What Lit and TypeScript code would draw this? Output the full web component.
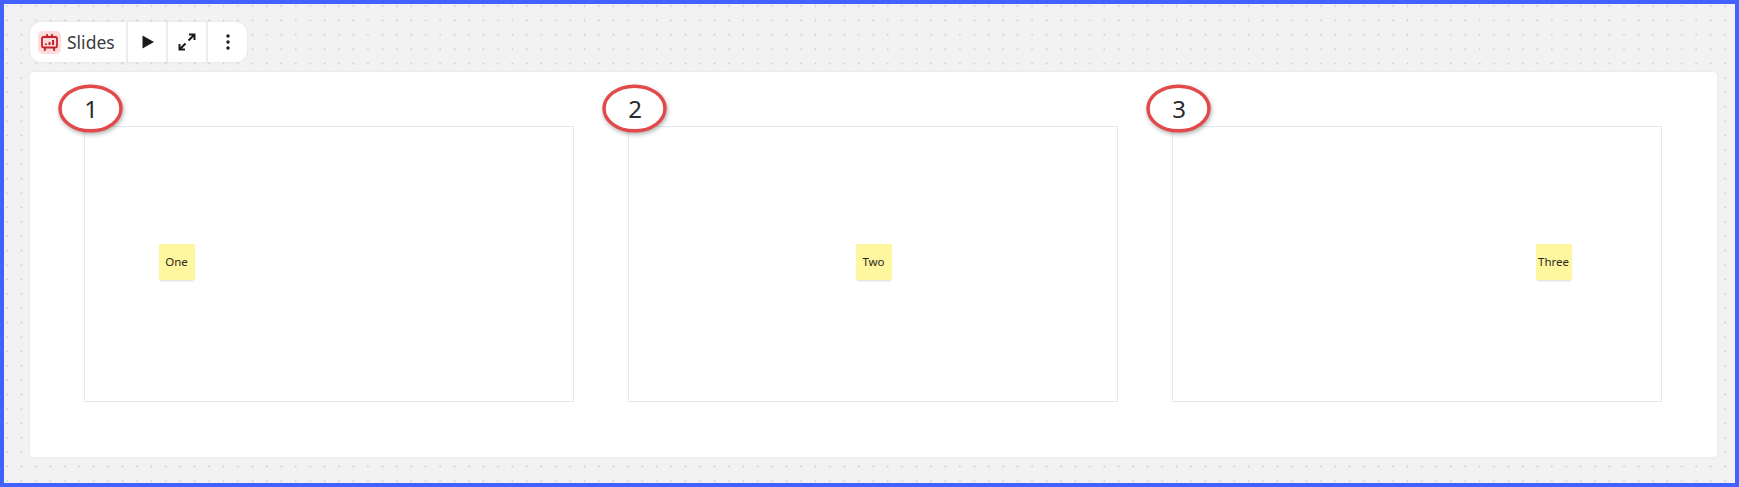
import { LitElement, html, css } from "lit";
import { customElement } from "lit/decorators.js";

interface Slide {
  num: string;
  note: string;
  noteLeft: number;
}

const SLIDES: Slide[] = [
  { num: "1", note: "One", noteLeft: 73.5 },
  { num: "2", note: "Two", noteLeft: 226.5 },
  { num: "3", note: "Three", noteLeft: 362.5 },
];

@customElement("app-root")
export class AppRoot extends LitElement {
  static styles = css`
    :host {
      display: block;
      box-sizing: border-box;
      width: 1739px;
      height: 487px;
      padding: 18px 18px 27px 26px;
      border: 4px solid #4262ff;
      background-color: #f2f2f2;
      background-image: radial-gradient(circle, #cdcdcd 0.7px, transparent 1.2px);
      background-size: 14.44px 14.4px;
      background-position: -4.2px -5.2px;
      font-family: "Noto Sans", "Open Sans", sans-serif;
      color: #222;
    }

    .toolbar {
      display: flex;
      width: fit-content;
      height: 40px;
      margin-bottom: 10px;
      background: #fff;
      border-radius: 11px;
      box-shadow: 0 0 2px rgba(0, 0, 0, 0.12);
      overflow: hidden;
    }

    .brand {
      display: flex;
      align-items: center;
      gap: 6px;
      width: 96px;
      box-sizing: border-box;
      padding-left: 8px;
      font-size: 17.5px;
      color: #3a3b42;
    }

    .logo {
      display: flex;
      align-items: center;
      justify-content: center;
      width: 23px;
      height: 23px;
      border-radius: 5px;
      background: #fcdcdc;
    }

    .tool {
      display: flex;
      align-items: center;
      justify-content: center;
      width: 40px;
      border-left: 2px solid #ececec;
      box-sizing: border-box;
    }

    .tool:last-child {
      width: 41px;
    }

    .panel {
      display: flex;
      gap: 54px;
      padding: 54px 55px 55px 54px;
      background: #fff;
      border-radius: 3px;
      box-shadow: 0 0 2px rgba(0, 0, 0, 0.1);
    }

    .frame {
      position: relative;
      box-sizing: border-box;
      width: 491px;
      height: 276px;
      border: 1.5px solid #e8e8e8;
    }

    .circle {
      position: absolute;
      left: -27.5px;
      top: -43px;
      width: 65px;
      height: 49px;
      overflow: visible;
    }

    .circle ellipse {
      fill: #fff;
      stroke: #e2494b;
      stroke-width: 3.4px;
      filter: drop-shadow(1px 2px 2px rgba(0, 0, 0, 0.3));
    }

    .num {
      position: absolute;
      left: -26px;
      top: -43px;
      width: 64px;
      height: 48px;
      display: flex;
      align-items: center;
      justify-content: center;
      font-size: 24px;
      color: #2a2a2a;
    }

    .note {
      position: absolute;
      top: 117px;
      display: flex;
      align-items: center;
      justify-content: center;
      box-sizing: border-box;
      width: 36px;
      height: 36px;
      padding-bottom: 2px;
      background: #fff6a0;
      box-shadow: 0 2px 2px -1px rgba(0, 0, 0, 0.14);
      font-size: 11.5px;
      color: #2a2a20;
    }
  `;

  render() {
    return html`
      <div class="toolbar">
        <div class="brand">
          <span class="logo">
            <svg width="19" height="19" viewBox="0 0 19 19" fill="none" stroke="#c5222a" stroke-width="1.8">
              <rect x="2" y="4" width="15" height="10.5" rx="1.5"></rect>
              <path d="M6.5 1.2 8 4M12.5 1.2 11 4M5.5 14.5 4.5 18M13.5 14.5 14.5 18"></path>
              <path d="M6 12V10.6M9.5 12V9M13 12V7" stroke-width="2"></path>
            </svg>
          </span>
          <span>Slides</span>
        </div>
        <div class="tool">
          <svg width="14" height="14" viewBox="0 0 14 14">
            <path d="M2.5 0.6 14 7 2.5 13.4Z" fill="#1a1a1a"></path>
          </svg>
        </div>
        <div class="tool">
          <svg width="20" height="20" viewBox="0 0 20 20" fill="none" stroke="#1a1a1a" stroke-width="2">
            <path d="M11.5 8.5 17.5 2.5M12 2.5H17.5V8M8.5 11.5 2.5 17.5M2.5 12V17.5H8"></path>
          </svg>
        </div>
        <div class="tool">
          <svg width="6" height="18" viewBox="0 0 6 18" fill="#1a1a1a">
            <circle cx="3" cy="3" r="1.7"></circle>
            <circle cx="3" cy="9" r="1.7"></circle>
            <circle cx="3" cy="15" r="1.7"></circle>
          </svg>
        </div>
      </div>
      <div class="panel">
        ${SLIDES.map(
          (s) => html`
            <div class="frame">
              <svg class="circle" viewBox="0 0 64 48">
                <ellipse cx="32" cy="24" rx="30" ry="22"></ellipse>
              </svg>
              <div class="num">${s.num}</div>
              <div class="note" style="left: ${s.noteLeft}px">${s.note}</div>
            </div>
          `,
        )}
      </div>
    `;
  }
}
